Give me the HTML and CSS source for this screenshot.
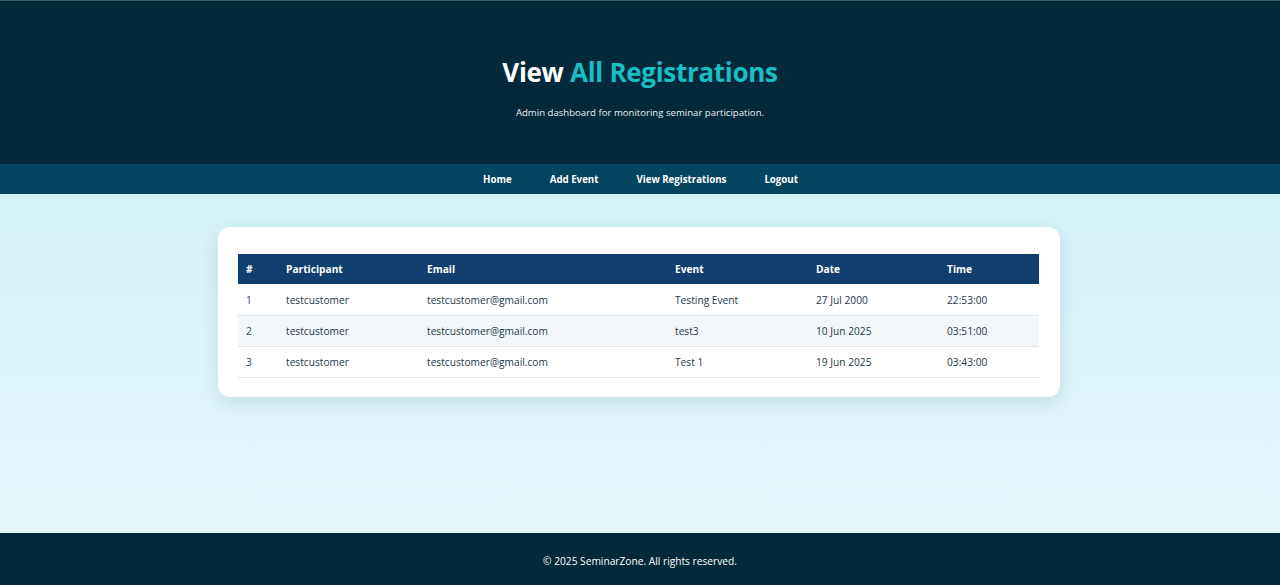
FILE: index.html
```html
<!DOCTYPE html>
<html lang="en">
<head>
<meta charset="utf-8">
<title>View All Registrations</title>
<link rel="stylesheet" href="styles.css">
</head>
<body>
<header class="hero">
  <h1 class="hero-title">View <span class="accent">All Registrations</span></h1>
  <p class="hero-sub">Admin dashboard for monitoring seminar participation.</p>
</header>
<nav class="nav">
  <a href="#" class="nav-link">Home</a>
  <a href="#" class="nav-link">Add Event</a>
  <a href="#" class="nav-link">View Registrations</a>
  <a href="#" class="nav-link">Logout</a>
</nav>
<main class="main">
  <section class="card">
    <table class="table">
      <colgroup>
        <col class="c-num"><col class="c-part"><col class="c-email"><col class="c-event"><col class="c-date"><col class="c-time">
      </colgroup>
      <thead>
        <tr><th>#</th><th>Participant</th><th>Email</th><th>Event</th><th>Date</th><th>Time</th></tr>
      </thead>
      <tbody>
        <tr><td class="num">1</td><td>testcustomer</td><td>testcustomer@gmail.com</td><td>Testing Event</td><td>27 Jul 2000</td><td>22:53:00</td></tr>
        <tr><td class="num">2</td><td>testcustomer</td><td>testcustomer@gmail.com</td><td>test3</td><td>10 Jun 2025</td><td>03:51:00</td></tr>
        <tr><td class="num">3</td><td>testcustomer</td><td>testcustomer@gmail.com</td><td>Test 1</td><td>19 Jun 2025</td><td>03:43:00</td></tr>
      </tbody>
    </table>
  </section>
</main>
<footer class="footer">© 2025 SeminarZone. All rights reserved.</footer>
</body>
</html>
```
FILE: styles.css
```css
* { box-sizing: border-box; }
html, body { height: 100%; }
body {
  margin: 0;
  font-family: "Open Sans", "Noto Sans", sans-serif;
  display: flex;
  flex-direction: column;
  min-height: 585px;
  background: linear-gradient(180deg, #cbeef5 0%, #e5f8fb 100%);
}
.hero {
  background: #03293b;
  border-top: 1px solid #3d5a66;
  height: 164px;
  padding-top: 51px;
  text-align: center;
  color: #fff;
}
.hero-title {
  margin: 0;
  font-size: 26px;
  font-weight: 700;
  line-height: 40px;
  letter-spacing: -0.3px;
}
.accent { color: #19bfc4; }
.hero-sub {
  margin: 12px 0 0;
  font-size: 9.6px;
  line-height: 18px;
  color: #e8f0f3;
}
.nav {
  background: #05445f;
  height: 30px;
  display: flex;
  justify-content: center;
  align-items: center;
  gap: 38px;
  padding-left: 1px;
}
.nav-link {
  color: #fff;
  font-size: 9.7px;
  font-weight: 700;
  text-decoration: none;
}
.main {
  flex: 1;
  padding: 33px 0 0 0;
  display: flex;
  justify-content: center;
}
.card {
  width: 842px;
  height: 170px;
  margin-right: 2px;
  background: #fff;
  border-radius: 12px;
  box-shadow: 0 6px 18px rgba(0, 60, 80, 0.12);
  padding: 27px 20px 0 20px;
}
.table {
  width: 801px;
  border-collapse: collapse;
  table-layout: fixed;
  font-size: 10.2px;
}
.c-num { width: 40px; }
.c-part { width: 141px; }
.c-email { width: 248px; }
.c-event { width: 141px; }
.c-date { width: 131px; }
.c-time { width: 100px; }
.table th {
  background: #0f3e6f;
  color: #fff;
  font-weight: 700;
  text-align: left;
  height: 30px;
  padding: 0 8px;
}
.table td {
  color: #24384a;
  height: 31px;
  padding: 1px 8px 0;
  border-bottom: 1px solid #dfe6ea;
}
.table td.num { color: #1f4a72; }
.table tbody tr:nth-child(2) td { background: #f3f7f9; }
.footer {
  background: #03293b;
  height: 52px;
  display: flex;
  align-items: center;
  justify-content: center;
  padding-top: 4px;
  color: #fff;
  font-size: 10.2px;
}
```
